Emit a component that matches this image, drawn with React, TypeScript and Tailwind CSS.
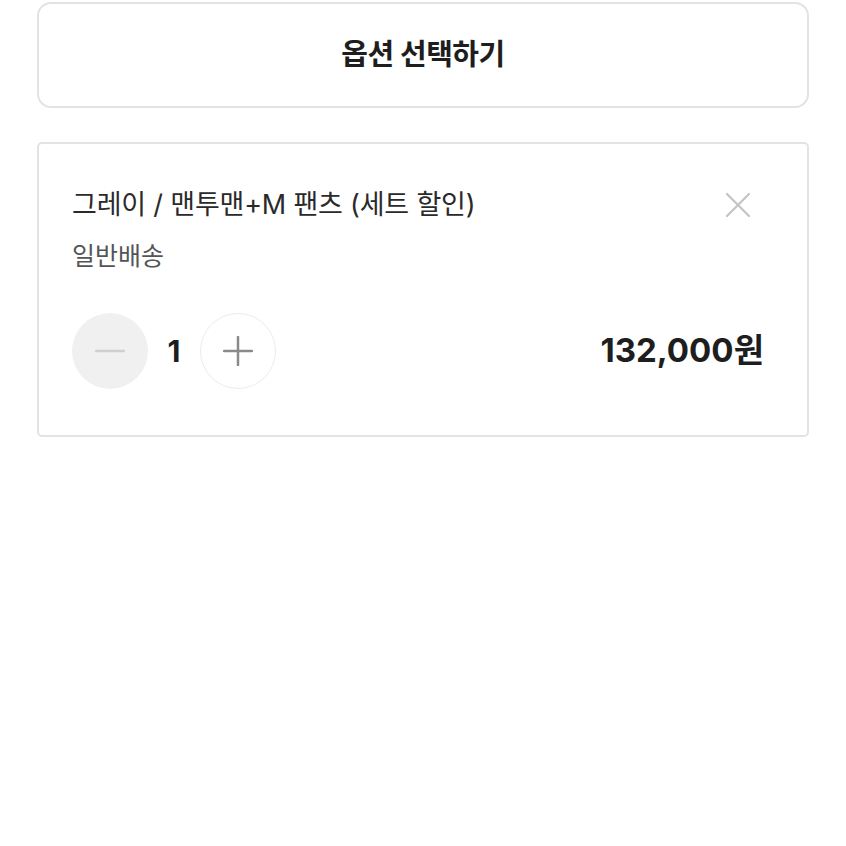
import React, { useState } from 'react';

const FONT = { fontFamily: 'Inter, "Noto Sans CJK KR", "Noto Sans", sans-serif' };

export default function App() {
  const [qty, setQty] = useState(1);
  const unitPrice = 132000;

  return (
    <div className="w-[846px] min-h-[846px] bg-white px-[37px] pt-[2px]" style={FONT}>
      {/* Option select button */}
      <button className="w-full h-[106px] rounded-[14px] border-2 border-[#e3e3e3] bg-white flex items-center justify-center">
        <span className="text-[29px] font-bold text-[#1e1e1e] tracking-[-0.5px]">옵션 선택하기</span>
      </button>

      {/* Selected option card */}
      <div className="mt-[34px] rounded-[5px] border-2 border-[#e3e3e3] pl-[33px] pr-[43px] pt-[44px] pb-[46px]">
        <div className="flex items-center justify-between">
          <span className="text-[27px] leading-[34px] text-[#2a2a2a] tracking-[-0.2px]">
            그레이 / 맨투맨+M 팬츠 (세트 할인)
          </span>
          <svg width="26" height="26" viewBox="0 0 26 26" className="mr-[13px]">
            <path d="M2 2 L24 24 M24 2 L2 24" stroke="#c4c4c4" strokeWidth="2.2" strokeLinecap="round" />
          </svg>
        </div>
        <div className="mt-[18px] text-[25px] leading-[32px] text-[#555555]">일반배송</div>

        <div className="mt-[41px] flex items-center justify-between">
          <div className="flex items-center">
            <button
              onClick={() => setQty(Math.max(1, qty - 1))}
              className="w-[76px] h-[76px] rounded-full bg-[#f0f0f0] flex items-center justify-center"
            >
              <svg width="30" height="30" viewBox="0 0 30 30">
                <path d="M1 15 H29" stroke="#cfcfcf" strokeWidth="2.5" strokeLinecap="round" />
              </svg>
            </button>
            <span className="w-[52px] text-center text-[30px] font-bold text-[#1e1e1e]">{qty}</span>
            <button
              onClick={() => setQty(qty + 1)}
              className="w-[76px] h-[76px] rounded-full border-[1.5px] border-[#ececec] bg-white flex items-center justify-center"
            >
              <svg width="30" height="30" viewBox="0 0 30 30">
                <path d="M1 15 H29 M15 1 V29" stroke="#8a8a8a" strokeWidth="2.5" strokeLinecap="round" />
              </svg>
            </button>
          </div>
          <span className="text-[33px] font-bold text-[#1e1e1e]">
            {(unitPrice * qty).toLocaleString('en-US')}원
          </span>
        </div>
      </div>
    </div>
  );
}
